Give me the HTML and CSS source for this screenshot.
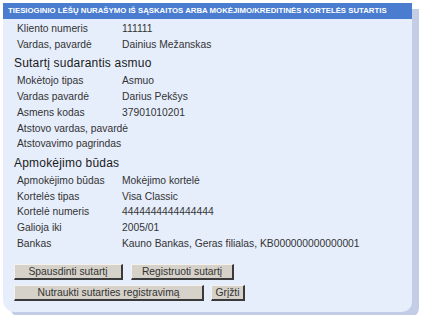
FILE: index.html
```html
<!DOCTYPE html>
<html lang="lt">
<head>
  <meta charset="UTF-8">
  <title>Sutartis</title>
  <link rel="stylesheet" href="styles.css">
</head>
<body>
  <div class="panel">
    <div class="panel__title">Tiesioginio lėšų nurašymo iš sąskaitos arba mokėjimo/kreditinės kortelės sutartis</div>
    <div class="panel__body">
      <div class="rows">
        <div>Kliento numeris</div><div>111111</div>
        <div>Vardas, pavardė</div><div>Dainius Mežanskas</div>
      </div>
      <h2>Sutartį sudarantis asmuo</h2>
      <div class="rows">
        <div>Mokėtojo tipas</div><div>Asmuo</div>
        <div>Vardas pavardė</div><div>Darius Pekšys</div>
        <div>Asmens kodas</div><div>37901010201</div>
        <div>Atstovo vardas, pavardė</div><div></div>
        <div>Atstovavimo pagrindas</div><div></div>
      </div>
      <h2>Apmokėjimo būdas</h2>
      <div class="rows">
        <div>Apmokėjimo būdas</div><div>Mokėjimo kortelė</div>
        <div>Kortelės tipas</div><div>Visa Classic</div>
        <div>Kortelė numeris</div><div>4444444444444444</div>
        <div>Galioja iki</div><div>2005/01</div>
        <div>Bankas</div><div>Kauno Bankas, Geras filialas, KB000000000000001</div>
      </div>
      <div class="buttons">
        <div class="buttons__row">
          <button class="btn btn--print">Spausdinti sutartį</button>
          <button class="btn btn--reg">Registruoti sutartį</button>
        </div>
        <div class="buttons__row">
          <button class="btn btn--cancel">Nutraukti sutarties registravimą</button>
          <button class="btn btn--back">Grįžti</button>
        </div>
      </div>
    </div>
  </div>
</body>
</html>
```

FILE: styles.css
```css
body {
  margin: 0;
  padding: 3px;
  background-color: #fff;
  font-family: "Liberation Sans", Arial, sans-serif;
  color: #333;
}

* {
  margin: 0;
  box-sizing: border-box;
}

.panel {
  width: 409px;
  height: 309px;
  background-color: #e6eefc;
  border-radius: 0 0 10px 12px;
  box-shadow: 7px 6px 0 #c3cde5;
}

.panel__title {
  height: 16px;
  line-height: 16px;
  padding-left: 5px;
  background-color: #4a7dd0;
  color: #fff;
  font-size: 7.8px;
  font-weight: bold;
  text-transform: uppercase;
  white-space: nowrap;
  overflow: hidden;
}

.panel__body {
  padding: 2px 0 0 11px;
}

.rows {
  display: grid;
  grid-template-columns: 105px auto;
  padding-left: 3px;
  font-size: 10.3px;
  line-height: 15.7px;
  white-space: nowrap;
}

h2 {
  font-size: 12px;
  font-weight: normal;
  color: #1a1a1a;
  line-height: 20px;
  margin-top: 1px;
  letter-spacing: 0.2px;
}

.buttons {
  margin-top: 13px;
  display: flex;
  flex-direction: column;
  gap: 5px;
}

.buttons__row {
  display: flex;
  gap: 8px;
}

.btn {
  height: 16px;
  padding: 0;
  background-color: #d6d2ca;
  border-top: 1px solid #f4f2ee;
  border-left: 1px solid #f4f2ee;
  border-right: 2px solid #3a3a3a;
  border-bottom: 2px solid #3a3a3a;
  font-family: "Liberation Sans", Arial, sans-serif;
  font-size: 10.3px;
  color: #333;
  line-height: 12px;
}

.btn--print { width: 109px; }
.btn--reg { width: 103px; }
.btn--cancel { width: 190px; }
.btn--back { width: 34px; margin-left: -1px; }
```
